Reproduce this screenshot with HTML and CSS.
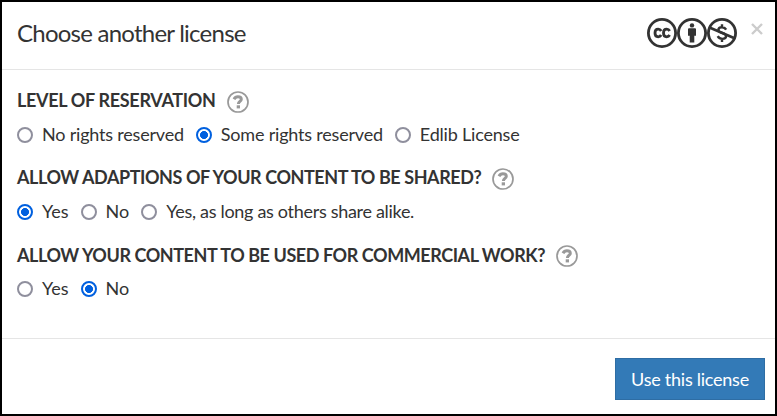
FILE: index.html
```html
<!DOCTYPE html>
<html lang="en">
<head>
<meta charset="utf-8">
<title>Choose another license</title>
<link rel="stylesheet" href="styles.css">
</head>
<body>
<svg class="defs" width="0" height="0" aria-hidden="true">
  <symbol id="help" viewBox="0 0 22 22">
    <circle cx="11" cy="11" r="10" fill="none" stroke="currentColor" stroke-width="1.7"/>
    <path d="M7 8.200C7.900 6.500 9.300 5.800 10.900 5.800c2 0 3.400 1 3.400 2.500 0 2.100-2.900 2.200-2.900 4.700" fill="none" stroke="currentColor" stroke-width="3"/>
    <path d="M9.700 14.300h3.300v3.100H9.700z" fill="currentColor"/>
  </symbol>
</svg>
<div class="modal">
  <header class="header">
    <h1 class="title">Choose another license</h1>
    <div class="badges">
      <svg viewBox="0 0 30 30"><circle cx="15" cy="15" r="13.6"/><path class="cc" d="M14.200 13C13.400 11.600 12.400 11.200 11.200 11.200c-2.100 0-3.200 1.500-3.200 3.800s1.100 3.800 3.200 3.800c1.300 0 2.300-.6 3-1.800M22.700 13c-.8-1.400-1.800-1.800-3-1.800-2.100 0-3.200 1.500-3.200 3.800s1.100 3.800 3.200 3.800c1.300 0 2.300-.6 3-1.800"/></svg>
      <svg viewBox="0 0 30 30"><circle cx="15" cy="15" r="13.6"/><g class="solid"><circle cx="15" cy="7.400" r="2.200"/><path d="M12 10.300h6q1 0 1 1v6.400h-1.700V24.500h-4.600v-6.800H11v-6.400q0-1 1-1z"/></g></svg>
      <svg viewBox="0 0 30 30"><circle cx="15" cy="15" r="13.6"/><path class="dollar" d="M15 6.200v3M15 21v3M19.200 11.600C18.200 10 16.800 9.300 15 9.300c-2.200 0-3.600 1-3.600 2.600 0 3.500 7.700 2.600 7.700 6.200 0 1.800-1.600 2.800-3.800 2.800-2.100 0-3.600-.9-4.600-2.700"/><path class="slash" d="M2.500 9.500l25 10.800"/></svg>
    </div>
    <button class="close" aria-label="Close"><svg viewBox="0 0 12 12"><path d="M1 1l10 10M11 1L1 11"/></svg></button>
  </header>
  <main class="body">
    <section class="group">
      <h2 class="heading"><span class="h-level">LEVEL OF RESERVATION</span><svg class="help"><use href="#help"/></svg></h2>
      <div class="options">
        <label class="option"><input type="radio" name="level"><span>No rights reserved</span></label>
        <label class="option"><input type="radio" name="level" checked><span>Some rights reserved</span></label>
        <label class="option"><input type="radio" name="level"><span>Edlib License</span></label>
      </div>
    </section>
    <section class="group">
      <h2 class="heading"><span class="h-share">ALLOW ADAPTIONS OF YOUR CONTENT TO BE SHARED?</span><svg class="help"><use href="#help"/></svg></h2>
      <div class="options">
        <label class="option"><input type="radio" name="share" checked><span class="short">Yes</span></label>
        <label class="option"><input type="radio" name="share"><span class="short">No</span></label>
        <label class="option"><input type="radio" name="share"><span class="long">Yes, as long as others share alike.</span></label>
      </div>
    </section>
    <section class="group">
      <h2 class="heading heading-low"><span class="h-work">ALLOW YOUR CONTENT TO BE USED FOR COMMERCIAL WORK?</span><svg class="help"><use href="#help"/></svg></h2>
      <div class="options">
        <label class="option"><input type="radio" name="work"><span class="short">Yes</span></label>
        <label class="option"><input type="radio" name="work" checked><span class="short">No</span></label>
      </div>
    </section>
  </main>
  <footer class="footer"><button class="submit">Use this license</button></footer>
</div>
</body>
</html>
```
FILE: styles.css
```css
* { box-sizing: border-box; }
body { margin: 0; font-family: Lato, sans-serif; color: #333; }
.defs { display: block; }
.modal {
  width: 777px;
  height: 416px;
  border: 2px solid #000;
  background: #fff;
  display: flex;
  flex-direction: column;
}
.header {
  height: 68px;
  border-bottom: 1px solid #e5e5e5;
  padding: 0 12px 0 15px;
  display: flex;
  align-items: center;
}
.title { margin: 0 auto 0 0; font-size: 24px; font-weight: 400; line-height: 30px; padding-bottom: 5px; letter-spacing: -0.76px; }
.badges { display: flex; margin: 0 14px 5px 0; }
.badges svg { display: block; width: 30px; height: 30px; fill: none; stroke: #333; stroke-width: 2.8; }
.badges .cc { stroke-width: 2.8; }
.badges .solid { fill: #333; stroke: none; }
.badges .dollar { stroke-width: 2.4; }
.badges .slash { stroke-width: 2.6; }
.close { padding: 0; border: 0; background: none; width: 12px; height: 12px; margin-bottom: 13px; }
.close svg { display: block; width: 12px; height: 12px; stroke: #ccc; stroke-width: 2.4; }
.body { padding: 19px 15px 0; height: 268px; }
.group { height: 77px; }
.heading { margin: 0; height: 26px; display: flex; align-items: center; font-size: 18px; font-weight: 700; line-height: 26px; white-space: nowrap; }
.heading span { margin-top: -4px; }
.heading-low span { margin-top: -2px; }
.h-level { letter-spacing: -0.32px; }
.h-share { letter-spacing: -0.43px; }
.h-work { letter-spacing: -0.43px; }
.help { width: 22px; height: 22px; margin-left: 11px; color: #999; }
.options { display: flex; height: 39px; gap: 12px; align-items: center; }
.option { display: flex; align-items: center; font-size: 18px; line-height: 26px; white-space: nowrap; letter-spacing: -0.2px; }
.option span { margin-top: -2px; }
.option .short { letter-spacing: 0; }
.option .long { letter-spacing: -0.3px; }
.option input {
  appearance: none;
  width: 16px;
  height: 16px;
  margin: 0 9px 0 0;
  border: 2px solid #8f8f9d;
  border-radius: 50%;
}
.option input:checked { border-color: #0060df; background: radial-gradient(circle, #0060df 3.7px, #fff 4.3px); }
.footer { flex: 1; border-top: 1px solid #e5e5e5; display: flex; justify-content: flex-end; padding: 19px 10px 0; }
.submit { width: 150px; height: 42px; padding: 0; border: 1px solid #2e6da4; background: #337ab7; color: #fff; font: 18px/26px Lato, sans-serif; letter-spacing: -0.25px; }
```
